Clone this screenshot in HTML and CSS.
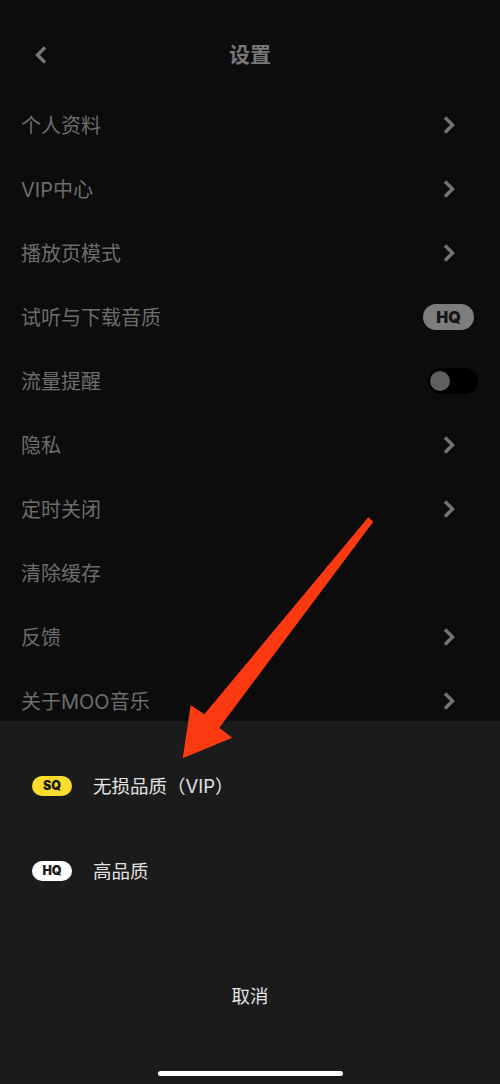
FILE: index.html
```html
<!DOCTYPE html>
<html lang="zh">
<head>
<meta charset="utf-8">
<title>设置</title>
<link rel="stylesheet" href="styles.css">
</head>
<body>
<main class="screen">
  <header class="nav">
    <svg class="back" viewBox="0 0 14 20"><path d="M11 2.500 3.500 10 11 17.500"/></svg>
    <h1 class="title">设置</h1>
  </header>
  <ul class="list">
    <li class="row"><span class="label">个人资料</span><svg class="chev" viewBox="0 0 14 20"><path d="M3 2.500 10.500 10 3 17.500"/></svg></li>
    <li class="row"><span class="label">VIP中心</span><svg class="chev" viewBox="0 0 14 20"><path d="M3 2.500 10.500 10 3 17.500"/></svg></li>
    <li class="row"><span class="label">播放页模式</span><svg class="chev" viewBox="0 0 14 20"><path d="M3 2.500 10.500 10 3 17.500"/></svg></li>
    <li class="row"><span class="label">试听与下载音质</span><span class="quality">HQ</span></li>
    <li class="row"><span class="label">流量提醒</span><span class="toggle"><span class="knob"></span></span></li>
    <li class="row"><span class="label">隐私</span><svg class="chev" viewBox="0 0 14 20"><path d="M3 2.500 10.500 10 3 17.500"/></svg></li>
    <li class="row"><span class="label">定时关闭</span><svg class="chev" viewBox="0 0 14 20"><path d="M3 2.500 10.500 10 3 17.500"/></svg></li>
    <li class="row"><span class="label">清除缓存</span></li>
    <li class="row"><span class="label">反馈</span><svg class="chev" viewBox="0 0 14 20"><path d="M3 2.500 10.500 10 3 17.500"/></svg></li>
    <li class="row"><span class="label">关于MOO音乐</span><svg class="chev" viewBox="0 0 14 20"><path d="M3 2.500 10.500 10 3 17.500"/></svg></li>
  </ul>
  <section class="sheet">
    <div class="option"><span class="badge badge-sq">SQ</span><span class="option-label">无损品质（VIP）</span></div>
    <div class="option"><span class="badge badge-hq">HQ</span><span class="option-label">高品质</span></div>
    <div class="cancel">取消</div>
    <div class="home-bar"></div>
  </section>
  <svg class="arrow" viewBox="0 0 500 1084"><polygon points="368.300,517.300 373.300,521.700 219.300,727.700 232.300,737.700 182.700,758.300 190.700,705 204.300,714.300"/></svg>
</main>
</body>
</html>
```
FILE: styles.css
```css
* { box-sizing: border-box; }
html, body { margin: 0; padding: 0; }
body {
  background: #0c0c0c;
  font-family: "Inter", "Noto Sans CJK SC", sans-serif;
}
.screen {
  position: relative;
  width: 500px;
  height: 1084px;
  overflow: hidden;
  background: #0c0c0c;
  color: #6c6c6c;
}
.nav {
  display: flex;
  align-items: center;
  justify-content: center;
  position: relative;
  height: 76px;
  margin-top: 17px;
}
.title {
  margin: 0;
  font-size: 21px;
  line-height: 76px;
  font-weight: 700;
  color: #787878;
}
.back {
  position: absolute;
  left: 34px;
  top: 28px;
  width: 14px;
  height: 20px;
}
.back path, .chev path {
  fill: none;
  stroke: #747474;
  stroke-width: 3.400;
}
.list {
  list-style: none;
  margin: 0;
  padding: 0;
}
.row {
  display: flex;
  align-items: center;
  justify-content: space-between;
  height: 64px;
  padding: 0 22px 0 21px;
  font-size: 20px;
  color: #6c6c6c;
}
.label {
  margin-bottom: 2px;
}
.chev {
  width: 14px;
  height: 20px;
  margin-right: 22px;
}
.quality {
  display: flex;
  align-items: center;
  justify-content: center;
  width: 51px;
  height: 26px;
  margin-right: 4px;
  border-radius: 13px;
  background: #7d7d7d;
  color: #161616;
  font-size: 16px;
  font-weight: 900;
}
.toggle {
  display: flex;
  align-items: center;
  width: 50px;
  height: 26px;
  padding-left: 2px;
  border-radius: 13px;
  background: #000;
}
.knob {
  width: 20px;
  height: 20px;
  border-radius: 50%;
  background: #5e5e5e;
}
.sheet {
  position: absolute;
  left: 0;
  right: 0;
  bottom: 0;
  height: 363px;
  padding-top: 22px;
  background: #1b1b1b;
  color: #e2e2e2;
  font-size: 18.500px;
}
.option {
  display: flex;
  align-items: center;
  gap: 21px;
  height: 85px;
  padding-left: 32px;
}
.option-label {
  margin-bottom: 2px;
}
.badge {
  display: flex;
  align-items: center;
  justify-content: center;
  width: 40px;
  height: 20px;
  border-radius: 10px;
  color: #1b1b1b;
  font-size: 12.500px;
  font-weight: 900;
}
.badge-sq { background: #fddc2e; }
.badge-hq { background: #fff; }
.cancel {
  margin-top: 65px;
  height: 36px;
  line-height: 36px;
  text-align: center;
}
.home-bar {
  width: 185px;
  height: 5px;
  margin: 57px auto 0;
  border-radius: 3px;
  background: #fff;
}
.arrow {
  position: absolute;
  left: 0;
  top: 0;
  width: 500px;
  height: 1084px;
  pointer-events: none;
}
.arrow polygon { fill: #fb3a12; }
```
